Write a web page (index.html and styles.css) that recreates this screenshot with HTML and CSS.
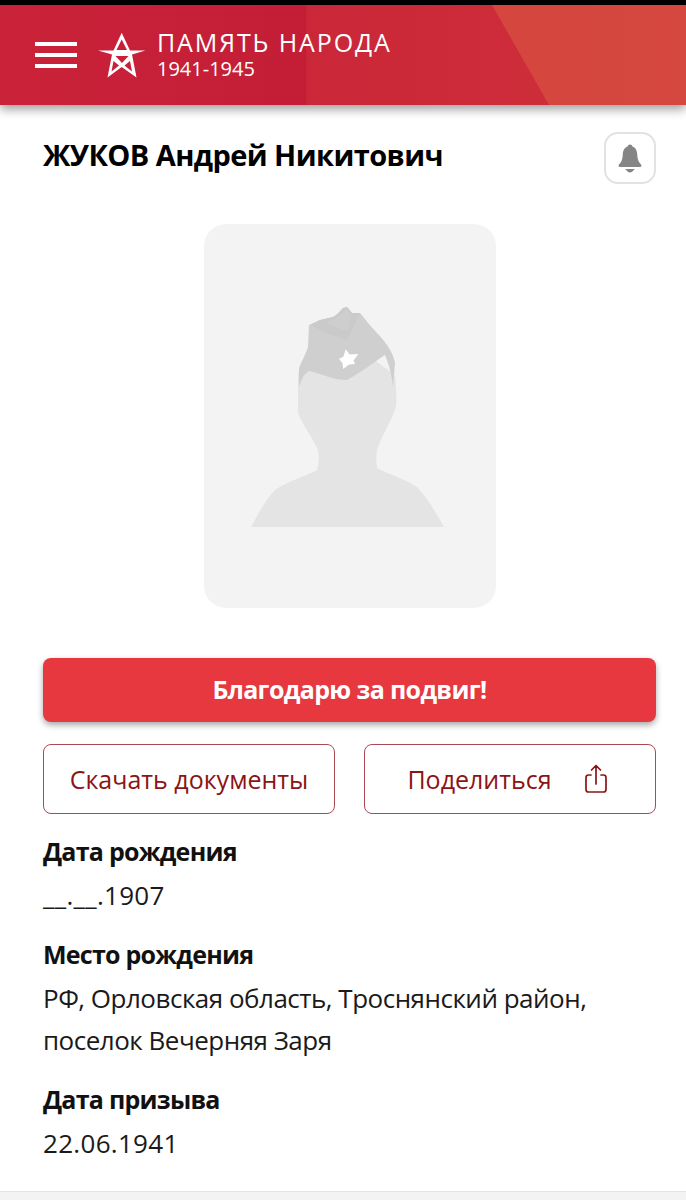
FILE: index.html
```html
<!DOCTYPE html>
<html lang="ru">
<head>
  <meta charset="UTF-8">
  <title>Память народа</title>
  <meta name="viewport" content="width=device-width, initial-scale=1.0">
  <link rel="stylesheet" href="styles.css">
</head>
<body>

  <div class="status-bar"></div>

  <header class="top-bar">
    <button class="menu-btn" aria-label="Меню">
      <span></span><span></span><span></span>
    </button>
    <svg class="logo" viewBox="0 0 55 50" aria-hidden="true">
      <path fill="#fff" fill-rule="evenodd" d="M26.700 2.700L35 20.500L50.500 20.500L37 24.500L41.500 47.500L26.700 37L12.500 47.500L17 24.500L3 20.500L18.500 20.500ZM26.700 9.500L21.500 20L32 20ZM20.500 26L33.500 26L27 33ZM18.500 31L16.500 41.500L24 35.500ZM35 31L37 41.500L29.500 35.500Z"/>
    </svg>
    <div class="brand">
      <div class="brand-name">ПАМЯТЬ НАРОДА</div>
      <div class="brand-years">1941-1945</div>
    </div>
  </header>

  <main class="content">
    <div class="title-row">
      <h1>ЖУКОВ Андрей Никитович</h1>
      <button class="bell-btn" aria-label="Подписаться">
        <svg viewBox="0 0 24 29" aria-hidden="true">
          <path fill="#858585" d="M12 0.500C13.400 0.500 14.200 1.400 14.400 2.600C17.800 3.800 19 6.800 19.200 10.200C19.400 15 20.400 18 23 20.400C23.900 21.300 23.500 23 22 23H2C0.500 23 0.100 21.300 1 20.400C3.600 18 4.600 15 4.800 10.200C5 6.800 6.200 3.800 9.600 2.600C9.800 1.400 10.600 0.500 12 0.500Z"/>
          <path fill="#858585" d="M7.500 25H16.500V26H15.500C15 27.600 13.600 28.500 12 28.500C10.400 28.500 9 27.600 8.500 26H7.500Z"/>
        </svg>
      </button>
    </div>

    <div class="photo">
      <svg class="silhouette" viewBox="0 0 230 250" aria-hidden="true">
        <path fill="#e4e4e4" d="M21 237C28 224 36 209 45 200C58 191 76 186 87 180C89 172 89 166 88 160C82 146 73 136 68 123V83L117 50L165 85C166 97 167 107 166 117C161 132 152 145 147 160C146 166 146 172 147 178C158 184 175 189 187 197C197 207 206 223 214 237Z"/>
        <path fill="#cfcfcf" d="M69 97V78C72 70 76 64 78 57L79 35L90 30L103 27C107 25 110 21 113 18L117 17L122 23H130C136 30 141 37 147 43C152 48 157 54 160 60C163 65 164 69 165 73L163 97C162 87 160 77 155 65C143 73 130 83 117 90C105 90 93 85 80 81C75 82 72 88 69 97Z"/>
        <path fill="#cacaca" d="M80 35L90 30L103 27C107 25 110 21 113 18L117 17L122 23H130L117 50C105 47 92 41 80 35Z"/>
        <path fill="#cecece" d="M96 33C103 29 109 27 113 22C116 19 118 20 120 26C121 32 119 37 117 41C110 39 103 36 96 33Z"/>
        <path fill="#fff" d="M115.700 59.300L119.500 64.500L128.300 64L123.500 70.500L125 74L119 74.500L113.300 79L112.500 73L109 69L113.500 66.500Z"/>
      </svg>
    </div>

    <button class="thanks-btn">Благодарю за подвиг!</button>

    <div class="actions">
      <button class="outline-btn">Скачать документы</button>
      <button class="outline-btn share-btn">
        Поделиться
        <svg class="share-icon" viewBox="0 0 24 30" aria-hidden="true">
          <path fill="none" stroke="#8b1414" stroke-width="1.700" stroke-linecap="round" stroke-linejoin="round" d="M7 11H4.500C2.800 11 2 11.800 2 13.500V25.500C2 27.200 2.800 28 4.500 28H19.500C21.200 28 22 27.200 22 25.500V13.500C22 11.800 21.200 11 19.500 11H17M12 20V1.500M7.500 6L12 1.500L16.500 6"/>
        </svg>
      </button>
    </div>

    <dl class="facts">
      <dt>Дата рождения</dt>
      <dd class="date">__.__.1907</dd>
      <dt>Место рождения</dt>
      <dd>РФ, Орловская область, Троснянский район, поселок Вечерняя Заря</dd>
      <dt>Дата призыва</dt>
      <dd class="date last">22.06.1941</dd>
      <dt>Воинское звание</dt>
    </dl>
  </main>

  <div class="bottom-bar"></div>

</body>
</html>
```

FILE: styles.css
```css
html, body {
  height: 1200px;
  overflow: hidden;
}

body {
  margin: 0;
  background: #fff;
  font-family: 'Open Sans', 'Noto Sans', sans-serif;
  color: #1a1a1a;
}

button {
  font-family: inherit;
  background: none;
  cursor: pointer;
}

.status-bar {
  height: 5px;
  background: #000;
}

.top-bar {
  position: relative;
  display: flex;
  align-items: center;
  height: 100px;
  padding-left: 35px;
  background: linear-gradient(90deg, #c92239 0%, #c41e37 44.600%, #ca2738 44.700%, #d0303a 100%);
  box-shadow: 0 4px 10px rgba(0,0,0,0.4);
  color: #fff;
}

.top-bar::before {
  content: "";
  position: absolute;
  top: 0;
  right: 0;
  bottom: 0;
  left: 0;
  background: linear-gradient(90deg, #d1403c, #d5483f);
  clip-path: polygon(492px 0, 100% 0, 100% 100%, 549px 100%);
}

.menu-btn {
  display: flex;
  flex-direction: column;
  gap: 7px;
  width: 42px;
  padding: 0;
  border: none;
}

.menu-btn span {
  display: block;
  height: 4px;
  background: #fff;
}

.logo {
  position: relative;
  width: 55px;
  height: 50px;
  margin-left: 18px;
}

.brand {
  position: relative;
  margin: 0 0 2px 7px;
}

.brand-name {
  font-size: 25px;
  line-height: 29px;
  letter-spacing: 1.900px;
}

.brand-years {
  font-size: 20px;
  line-height: 24px;
}

.content {
  padding: 0 30px 0 43px;
}

.title-row {
  display: flex;
  justify-content: space-between;
  align-items: center;
  margin-top: 27px;
}

h1 {
  margin: 0 0 8px;
  font-size: 29px;
  font-weight: 700;
  letter-spacing: -0.570px;
  color: #000;
}

.bell-btn {
  display: flex;
  align-items: center;
  justify-content: center;
  width: 52px;
  height: 52px;
  padding: 0;
  border: 2px solid #e2e2e2;
  border-radius: 14px;
}

.bell-btn svg {
  width: 24px;
  height: 29px;
}

.photo {
  display: flex;
  align-items: flex-start;
  width: 292px;
  height: 384px;
  margin: 40px auto 50px;
  background: #f3f3f3;
  border-radius: 22px;
}

.silhouette {
  width: 230px;
  height: 250px;
  margin: 66px 0 0 26px;
}

.thanks-btn {
  display: block;
  width: 100%;
  height: 64px;
  padding: 0 0 3px;
  border: none;
  border-radius: 8px;
  background: #e7373f;
  box-shadow: 0 3px 6px rgba(0,0,0,0.35);
  color: #fff;
  font-size: 25px;
  font-weight: 700;
  letter-spacing: -0.650px;
}

.actions {
  display: flex;
  justify-content: space-between;
  margin-top: 22px;
}

.outline-btn {
  display: flex;
  align-items: center;
  justify-content: center;
  width: 292px;
  height: 70px;
  padding: 0;
  border: 1px solid #ab4a52;
  border-radius: 8px;
  color: #8b1414;
  font-size: 25px;
}

.share-btn {
  padding-right: 5px;
}

.share-icon {
  width: 24px;
  height: 30px;
  margin-left: 32px;
}

.facts {
  margin: 19px 0 0;
}

.facts dt {
  font-size: 25px;
  line-height: 36px;
  font-weight: 700;
  letter-spacing: -0.750px;
  color: #111;
}

.facts dd {
  margin: 5px 0 20px;
  font-size: 26px;
  line-height: 42px;
  letter-spacing: -0.500px;
}

.facts .date {
  letter-spacing: 0.300px;
}

.facts .last {
  margin-bottom: 17px;
}

.bottom-bar {
  position: fixed;
  left: 0;
  right: 0;
  bottom: 0;
  height: 8px;
  background: #f3f3f3;
  border-top: 1px solid #e4e4e4;
}
```
